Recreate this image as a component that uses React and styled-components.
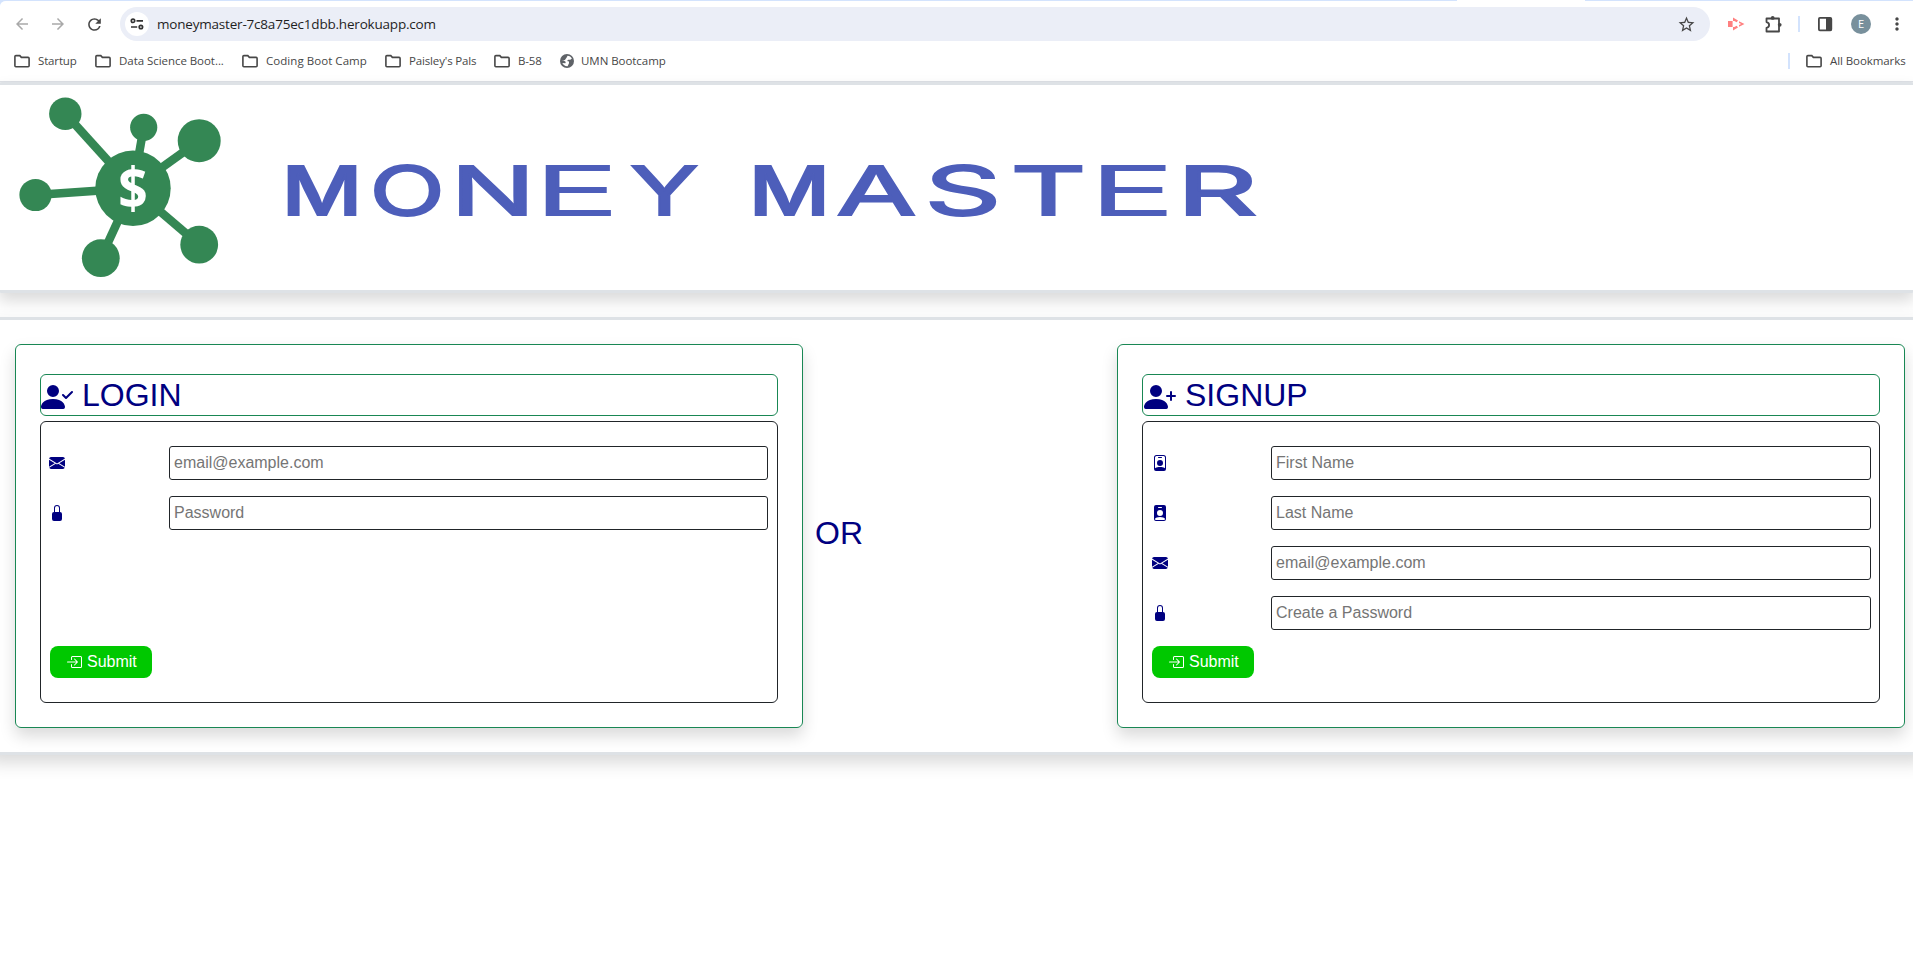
import React from "react";
import styled, { createGlobalStyle } from "styled-components";
import {
  BsPersonCheckFill,
  BsPersonPlusFill,
  BsEnvelopeFill,
  BsLockFill,
  BsPersonBadge,
  BsPersonBadgeFill,
  BsBoxArrowInRight,
} from "react-icons/bs";
import {
  MdArrowBack,
  MdArrowForward,
  MdRefresh,
  MdStarOutline,
  MdMoreVert,
} from "react-icons/md";

const GlobalStyle = createGlobalStyle`
  *, *::before, *::after { box-sizing: border-box; }
  body {
    margin: 0;
    min-height: 100vh;
    background: #fff;
    color: #000080;
    font-family: "Liberation Sans", Arial, sans-serif;
    font-size: 16px;
    overflow: hidden;
  }
  svg { display: block; flex: none; }
`;

/* ---------- browser chrome ---------- */

const Chrome = styled.div`
  height: 82px;
  background: linear-gradient(
      90deg,
      #d3e3fd 1457px,
      #fff 1457px,
      #fff 1585px,
      #d3e3fd 1585px
    );
`;

const ChromeBody = styled.div`
  padding-top: 1px;
  height: 82px;
  background: #fff;
  background-clip: content-box;
  border-bottom: 1px solid #dee1e6;
  border-top-left-radius: 6px;
`;

const Toolbar = styled.div`
  display: flex;
  align-items: center;
  height: 46px;
  padding: 0 6px 0 12px;
`;

const NavButton = styled.span`
  display: flex;
  justify-content: center;
  width: ${(p) => p.$width || 36}px;
  color: ${(p) => (p.$muted ? "#a9a9a9" : "#474747")};
`;

const NavGroup = styled.div`
  display: flex;
  align-items: center;
  width: 108px;
  margin-left: -8px;
`;

const AddressBar = styled.div`
  display: flex;
  align-items: center;
  width: 1590px;
  height: 34px;
  margin-left: 8px;
  padding: 0 14px 0 5px;
  border-radius: 17px;
  background: #ebeef7;
  color: #474747;
`;

const SiteInfo = styled.span`
  display: flex;
  align-items: center;
  justify-content: center;
  width: 24px;
  height: 24px;
  border-radius: 50%;
  background: #fff;
`;

const Url = styled.span`
  flex: 1;
  margin-left: 8px;
  color: #1f1f1f;
  font: 13.5px "Open Sans", sans-serif;
  letter-spacing: -0.2px;
`;

const Actions = styled.div`
  display: flex;
  align-items: center;
  flex: 1;
  padding-left: 18px;
`;

const Divider = styled.span`
  width: 2px;
  height: 16px;
  background: #d3e3fd;
  margin: ${(p) => p.$margin || 0};
`;

const Avatar = styled.span`
  display: flex;
  align-items: center;
  justify-content: center;
  width: 20px;
  height: 20px;
  margin: 0 24px 0 18px;
  border-radius: 50%;
  background: #78909c;
  color: #fff;
  font: 10px Roboto, sans-serif;
`;

const BookmarkBar = styled.div`
  display: flex;
  align-items: center;
  height: 28px;
  padding: 0 0 0 14px;
`;

const Bookmark = styled.span`
  display: flex;
  align-items: center;
  gap: ${(p) => p.$gap || 8}px;
  width: ${(p) => p.$width}px;
  color: #474747;
  font: 11.5px/16px "Open Sans", sans-serif;
  letter-spacing: ${(p) => p.$track || -0.15}px;
  white-space: nowrap;
`;

const BookmarkLabel = styled.span`
  padding-bottom: 1px;
`;

const BookmarkSpacer = styled.span`
  flex: 1;
`;

const FolderIcon = () => (
  <svg width="16" height="14" viewBox="0 0 16 14" fill="none" stroke="#474747" strokeWidth="1.6">
    <path d="M.9 11.700V2.600c0-.6.4-1 1-1h3.900l1.600 1.800h6.700c.6 0 1 .4 1 1v7.300c0 .6-.4 1-1 1H1.900c-.6 0-1-.4-1-1z" />
  </svg>
);

const TuneIcon = () => (
  <svg width="14" height="12" viewBox="0 0 14 12" fill="none" stroke="#333" strokeWidth="1.7">
    <circle cx="3" cy="2.8" r="1.7" />
    <path d="M6.500 2.800H13M1 9H7.200" />
    <circle cx="10.900" cy="9" r="1.700" />
  </svg>
);

const RecorderIcon = () => (
  <svg width="17" height="14" viewBox="0 0 17 14">
    <path d="M0 4h4.600v6H0zM5 .6l5 2.900-1.300 1.700L6.300 4H5zM5 13.400l5-2.900-1.300-1.700L6.300 10H5zM11 4.200 16.500 7 11 9.800V8.100L13.200 7 11 5.900z" fill="#ff8080" />
  </svg>
);

const PuzzleIcon = () => (
  <svg width="19" height="19" viewBox="0 0 19 19">
    <path
      d="M2.500 3.500H15v13H2.500v-3.600c1.600-.3 2.600-1.400 2.600-2.900s-1-2.600-2.600-2.900z"
      fill="none" stroke="#474747" strokeWidth="1.800" strokeLinejoin="round"
    />
    <circle cx="8.700" cy="2.900" r="1.900" fill="#474747" />
    <circle cx="15.700" cy="9.800" r="1.900" fill="#474747" />
  </svg>
);

const GlobeIcon = () => (
  <svg width="14" height="14" viewBox="0 0 14 14">
    <circle cx="7" cy="7" r="7" fill="#5f6368" />
    <path
      d="M7.600 1.700c1.900.2 3.400 1.200 4.300 2.700L10.300 5.700H8.300L7 7l2 .5v1.700l-1.400 3c-2.300.2-4.300-1.100-5.300-3.200l3 .3.500-1.200-1.900-1.700-2.200-.2 3.200-.300 1.600-2.100z"
      fill="#fff"
    />
  </svg>
);

const SidePanelIcon = () => (
  <svg width="16" height="16" viewBox="0 0 16 16">
    <rect x="1.900" y="1.900" width="12.400" height="12.400" rx="1" fill="none" stroke="#474747" strokeWidth="1.800" />
    <path d="M9 2h5.500v12.500H9z" fill="#474747" />
  </svg>
);

const bookmarks = [
  { label: "Startup", width: 81 },
  { label: "Data Science Boot...", width: 147, track: -0.05 },
  { label: "Coding Boot Camp", width: 143, track: 0.05 },
  { label: "Paisley's Pals", width: 109 },
  { label: "B-58", width: 66 },
];

const BrowserChrome = () => (
  <Chrome>
    <ChromeBody>
      <Toolbar>
        <NavGroup>
          <NavButton $muted><MdArrowBack size={18} /></NavButton>
          <NavButton $muted><MdArrowForward size={18} /></NavButton>
          <NavButton><MdRefresh size={19} /></NavButton>
        </NavGroup>
        <AddressBar>
          <SiteInfo><TuneIcon /></SiteInfo>
          <Url>moneymaster-7c8a75ec1dbb.herokuapp.com</Url>
          <MdStarOutline size={19} />
        </AddressBar>
        <Actions>
          <RecorderIcon />
          <NavButton $width={56}><PuzzleIcon /></NavButton>
          <Divider $margin="0 17px 0 -3px" />
          <SidePanelIcon />
          <Avatar>E</Avatar>
          <NavButton $width={4}><MdMoreVert size={20} /></NavButton>
        </Actions>
      </Toolbar>
      <BookmarkBar>
        {bookmarks.map((b) => (
          <Bookmark key={b.label} $width={b.width} $track={b.track}>
            <FolderIcon />
            <BookmarkLabel>{b.label}</BookmarkLabel>
          </Bookmark>
        ))}
        <Bookmark $width={120} $gap={7} $track={-0.05}>
          <GlobeIcon />
          <BookmarkLabel>UMN Bootcamp</BookmarkLabel>
        </Bookmark>
        <BookmarkSpacer />
        <Divider $margin="0 16px 0 0" />
        <Bookmark $width={107} $track={-0.08}>
          <FolderIcon />
          <BookmarkLabel>All Bookmarks</BookmarkLabel>
        </Bookmark>
      </BookmarkBar>
    </ChromeBody>
  </Chrome>
);

/* ---------- page ---------- */

const Header = styled.header`
  height: 211px;
  margin: 0 -2px 24px;
  padding-left: 2px;
  border: solid #dee2e6;
  border-width: 3px 0;
  border-radius: 4px;
  box-shadow: 0 8px 16px rgba(0, 0, 0, 0.15);
`;

const Section = styled.main`
  display: flex;
  margin: 0 -12px;
  padding: 24px 20px 24px 27px;
  border: solid #dee2e6;
  border-width: 3px 0;
  box-shadow: 0 8px 16px rgba(0, 0, 0, 0.15);
`;

const Card = styled.section`
  display: flex;
  flex-direction: column;
  gap: 5px;
  width: 788px;
  height: 384px;
  padding: 29px 24px 24px;
  border: 1px solid #198754;
  border-radius: 6px;
  box-shadow: 0 8px 16px rgba(0, 0, 0, 0.15);
`;

const CardTitle = styled.h2`
  display: flex;
  align-items: center;
  gap: 9px;
  height: 42px;
  margin: 0;
  padding-left: ${(p) => (p.$wide ? 1 : 0)}px;
  border: 1px solid #198754;
  border-radius: 6px;
  font-size: 32px;
  font-weight: 400;
  line-height: 40px;

  svg { margin-top: 4px; }
`;

const Form = styled.form`
  display: flex;
  flex-direction: column;
  gap: 16px;
  flex: 1;
  padding: 24px ${(p) => (p.$wide ? 8 : 9)}px 24px 9px;
  border: 1px solid #212529;
  border-radius: 6px;
`;

const Field = styled.label`
  display: flex;
  align-items: center;
  height: 34px;
`;

const FieldIcon = styled.span`
  width: ${(p) => (p.$wide ? 119 : 120)}px;
  margin-left: ${(p) => (p.$wide ? 0 : -1)}px;
`;

const Input = styled.input`
  flex: 1;
  height: 34px;
  padding: 0 4px;
  border: 1px solid #212529;
  border-radius: 3px;
  background: #fff;
  font: 16px "Liberation Sans", Arial, sans-serif;

  &::placeholder { color: #757575; opacity: 1; }
`;

const Submit = styled.button`
  display: flex;
  align-items: center;
  align-self: flex-start;
  gap: 5px;
  height: 32px;
  margin-top: auto;
  padding: 0 15px 0 16px;
  border: 0;
  border-radius: 8px;
  background: #00c800;
  color: #fff;
  font: 16px "Liberation Sans", Arial, sans-serif;
`;

const Or = styled.div`
  flex: 1;
  align-self: center;
  padding: 0 0 6px 12px;
  font-size: 32px;
  line-height: 38px;
`;

/* glyph, left edge, right edge, side bearings as a share of the advance, weight */
const letters = [
  ["M", 286.5, 357.5, 0.09, 0.09, 500],
  ["O", 371.8, 442.4, 0.065, 0.065, 400],
  ["N", 457, 528.6, 0.105, 0.105, 400],
  ["E", 542.9, 613.9, 0.135, 0.085, 300],
  ["Y", 628.6, 700.2, 0.015, 0.015, 400],
  [" ", 705, 745, 0, 0, 400],
  ["M", 753.6, 825.3, 0.09, 0.09, 500],
  ["A", 836.1, 916.5, 0.03, 0.03, 400],
  ["S", 927.5, 998.6, 0.07, 0.07, 400],
  ["T", 1013, 1084, 0.065, 0.065, 400],
  ["E", 1098.4, 1169.5, 0.135, 0.085, 300],
  ["R", 1184.2, 1255.4, 0.125, 0.06, 400],
];

const nodes = [
  [65.3, 113.7, 16.2],
  [143.7, 127.3, 13.6],
  [199.2, 140.7, 21.5],
  [35.5, 195, 16.1],
  [100.8, 258.2, 18.9],
  [199.2, 244.7, 18.9],
];

const Wordmark = styled.text`
  font-family: Inter, sans-serif;
  font-size: 67.7px;
  fill: #4d5eba;
  stroke: #4d5eba;
  stroke-width: 1.8px;
  white-space: pre;
`;

const Logo = () => (
  <svg width="1280" height="205" viewBox="0 85 1280 205" aria-label="Money Master">
    <g fill="#348754" stroke="#348754">
      {nodes.map(([x, y, r]) => (
        <g key={`${x}-${y}`}>
          <path d={`M133 188.300L${x} ${y}`} strokeWidth="8.500" />
          <circle cx={x} cy={y} r={r} stroke="none" />
        </g>
      ))}
      <circle cx="133" cy="188.300" r="37.700" stroke="none" />
    </g>
    <text x="118.300" y="209" textLength="29.500" lengthAdjust="spacingAndGlyphs" fill="#fff" fontFamily="Open Sans, sans-serif" fontWeight="700" fontSize="58">$</text>
    <Wordmark y="215.300">
      {letters.map(([ch, x0, x1, l, r, weight]) => {
        const w = (x1 - x0 - 5) / (1 - l - r);
        return (
          <tspan key={x0} x={x0 + 2.5 - l * w} textLength={w} lengthAdjust="spacingAndGlyphs" fontWeight={weight}>{ch}</tspan>
        );
      })}
    </Wordmark>
  </svg>
);

const AuthCard = ({ icon: Icon, title, fields, wide }) => (
  <Card>
    <CardTitle $wide={wide}>
      <Icon size={32} />
      {title}
    </CardTitle>
    <Form $wide={wide}>
      {fields.map(({ icon: FIcon, placeholder }) => (
        <Field key={placeholder}>
          <FieldIcon $wide={wide}><FIcon size={16} /></FieldIcon>
          <Input placeholder={placeholder} />
        </Field>
      ))}
      <Submit type="button">
        <BsBoxArrowInRight size={16} />
        Submit
      </Submit>
    </Form>
  </Card>
);

export default function App() {
  return (
    <>
      <GlobalStyle />
      <BrowserChrome />
      <Header>
        <Logo />
      </Header>
      <Section>
        <AuthCard
          icon={BsPersonCheckFill}
          title="LOGIN"
          fields={[
            { icon: BsEnvelopeFill, placeholder: "email@example.com" },
            { icon: BsLockFill, placeholder: "Password" },
          ]}
        />
        <Or>OR</Or>
        <AuthCard
          wide
          icon={BsPersonPlusFill}
          title="SIGNUP"
          fields={[
            { icon: BsPersonBadge, placeholder: "First Name" },
            { icon: BsPersonBadgeFill, placeholder: "Last Name" },
            { icon: BsEnvelopeFill, placeholder: "email@example.com" },
            { icon: BsLockFill, placeholder: "Create a Password" },
          ]}
        />
      </Section>
    </>
  );
}
